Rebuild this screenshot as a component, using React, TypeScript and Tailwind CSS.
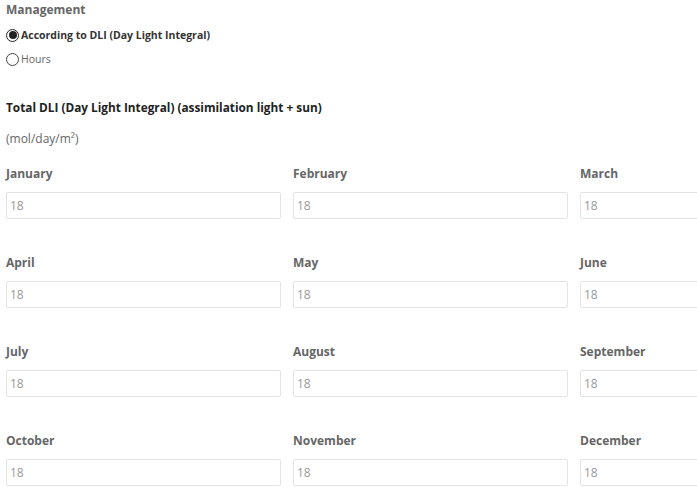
import React from "react";

const months = [
  "January", "February", "March",
  "April", "May", "June",
  "July", "August", "September",
  "October", "November", "December",
];

function Radio({ checked, label, bold }: { checked: boolean; label: string; bold?: boolean }) {
  return (
    <label className="flex items-center gap-[2px] leading-[20px]">
      <span
        className={
          "flex h-[13px] w-[13px] items-center justify-center rounded-full border " +
          (checked ? "border-[#222]" : "border-[#444]")
        }
      >
        {checked && <span className="h-[8px] w-[8px] rounded-full bg-[#222]" />}
      </span>
      <span className={bold ? "text-[10.5px] font-bold text-[#333]" : "text-[10.5px] text-[#666]"}>{label}</span>
    </label>
  );
}

export default function App() {
  return (
    <div
      className="w-[697px] h-[493px] overflow-hidden bg-white px-[6px]"
      style={{ fontFamily: '"Open Sans", "Noto Sans", sans-serif' }}
    >
      <div className="text-[12px] font-bold leading-[20px] text-[#666]">Management</div>
      <div className="mt-[5px]">
        <Radio checked label="According to DLI (Day Light Integral)" bold />
      </div>
      <div className="mt-[4px]">
        <Radio checked={false} label="Hours" />
      </div>
      <div className="mt-[28px] text-[11.8px] font-bold leading-[20px] text-[#222]">
        Total DLI (Day Light Integral) (assimilation light + sun)
      </div>
      <div className="mt-[12px] text-[12px] leading-[20px] text-[#666]">(mol/day/m²)</div>
      <div className="mt-[14px] grid w-[849px] grid-cols-[275px_275px_275px] gap-x-[12px] gap-y-[33px]">
        {months.map((m) => (
          <div key={m} className="flex flex-col">
            <div className="text-[12px] font-bold leading-[21px] text-[#666]">{m}</div>
            <div className="mt-[8px] flex h-[27px] items-center rounded-[2px] border border-[#e3e3e3] px-[3px] text-[12px] text-[#999]">
              18
            </div>
          </div>
        ))}
      </div>
    </div>
  );
}
